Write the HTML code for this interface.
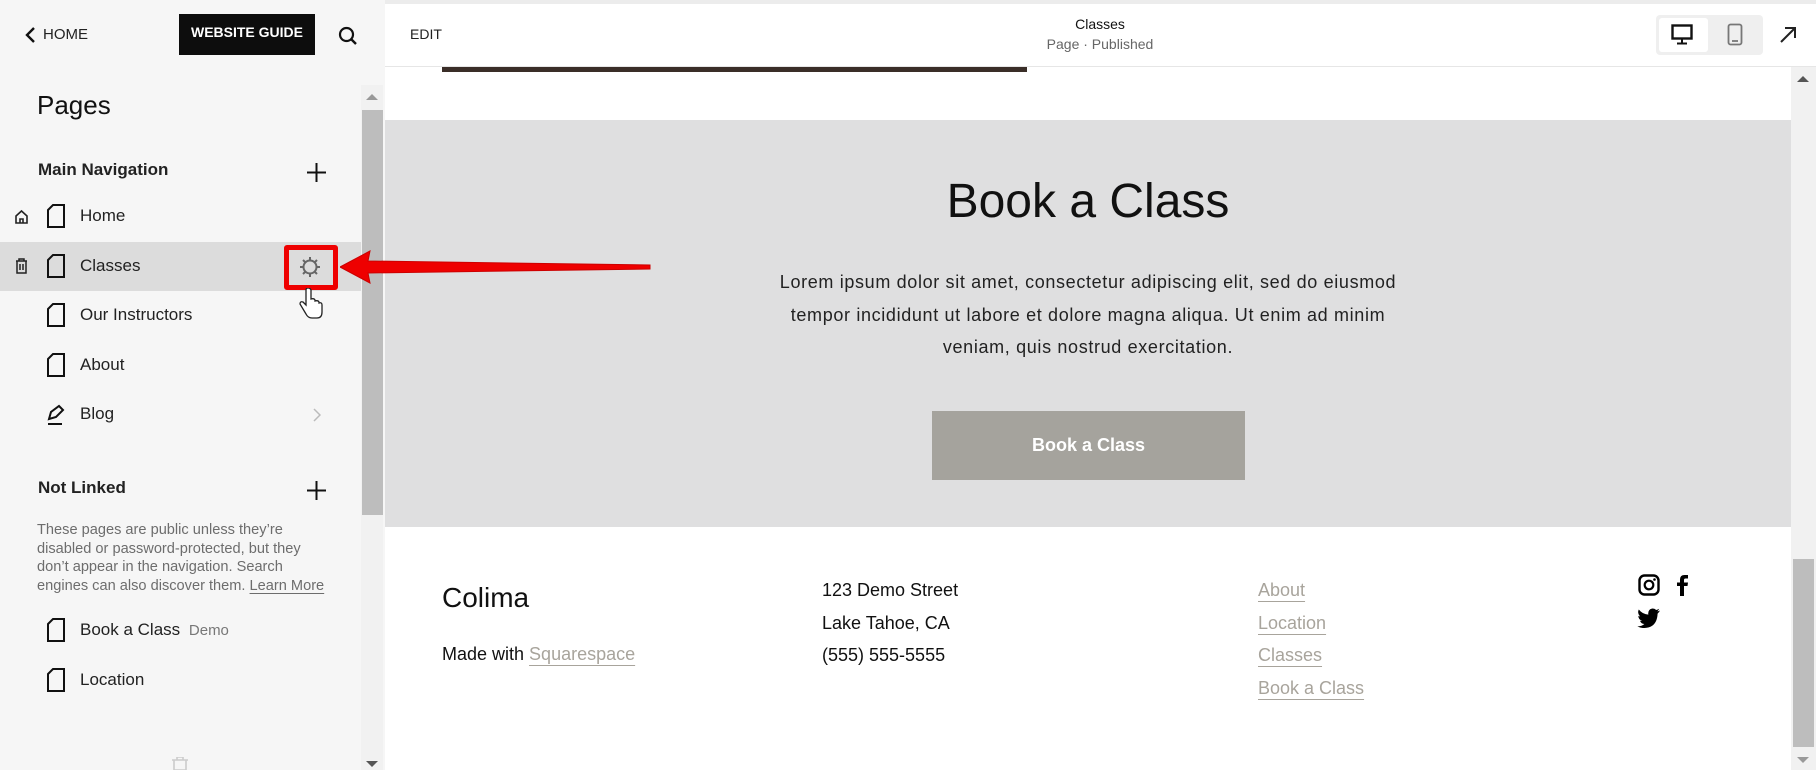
<!DOCTYPE html>
<html><head><meta charset="utf-8"><style>
*{box-sizing:border-box;margin:0;padding:0}
body{width:1816px;height:770px;overflow:hidden;position:relative;background:#fff;font-family:"Liberation Sans",sans-serif;color:#111}
.a{position:absolute}
#side{left:0;top:0;width:385px;height:770px;background:#f6f6f6}
.row{position:absolute;left:0;width:361px;height:49px;font-size:17px;color:#222}
.row .t{position:absolute;left:80px;top:14px}
.row svg.pg{position:absolute;left:47px;top:12px}
.lnk{color:#a8a49c;text-decoration:underline;text-underline-offset:5px;text-decoration-thickness:1px}
</style></head><body>
<div id="side" class="a">
  <svg class="a" style="left:24px;top:26px" width="12" height="18" viewBox="0 0 12 18"><path d="M10 2 L3 9 L10 16" fill="none" stroke="#111" stroke-width="2.4"/></svg>
  <div class="a" style="left:43px;top:26px;font-size:15px;color:#222">HOME</div>
  <div class="a" style="left:179px;top:14px;width:136px;height:41px;background:#0d0d0d;color:#fff;font-size:14px;font-weight:bold;text-align:center;line-height:37px">WEBSITE GUIDE</div>
  <svg class="a" style="left:338px;top:26px" width="20" height="20" viewBox="0 0 20 20"><circle cx="8.5" cy="8.5" r="6.5" fill="none" stroke="#111" stroke-width="2.2"/><path d="M13 13 L18 18" stroke="#111" stroke-width="2.4"/></svg>
  <div class="a" style="left:37px;top:90px;font-size:26px;color:#111">Pages</div>
  <div class="a" style="left:38px;top:160px;font-size:17px;font-weight:bold;color:#222">Main Navigation</div>
  <svg class="a" style="left:307px;top:163px" width="19" height="19"><path d="M9.5 0V19M0 9.5H19" stroke="#111" stroke-width="2"/></svg>

  <div class="row" style="top:192px"><svg class="a" style="left:14px;top:17px" width="15" height="15" viewBox="0 0 15 15"><path d="M2 14V7L7.5 2L13 7V14H2Z M6 14V10H9V14" fill="none" stroke="#222" stroke-width="1.6"/></svg><svg class="pg" width="18" height="24" viewBox="0 0 18 24"><path d="M1 6L6 1H17V23H1Z" fill="none" stroke="#111" stroke-width="2"/></svg><span class="t">Home</span></div>
  <div class="row" style="top:242px;background:#dcdcdc"><svg class="a" style="left:15px;top:16px" width="13" height="16" viewBox="0 0 13 16"><path d="M1 3H12M4 3V1H9V3M2 3V15H11V3M5 6V12M8 6V12" fill="none" stroke="#222" stroke-width="1.5"/></svg><svg class="pg" width="18" height="24" viewBox="0 0 18 24"><path d="M1 6L6 1H17V23H1Z" fill="none" stroke="#111" stroke-width="2"/></svg><span class="t">Classes</span></div>
  <div class="row" style="top:291px"><svg class="pg" width="18" height="24" viewBox="0 0 18 24"><path d="M1 6L6 1H17V23H1Z" fill="none" stroke="#111" stroke-width="2"/></svg><span class="t">Our Instructors</span></div>
  <div class="row" style="top:341px"><svg class="pg" width="18" height="24" viewBox="0 0 18 24"><path d="M1 6L6 1H17V23H1Z" fill="none" stroke="#111" stroke-width="2"/></svg><span class="t">About</span></div>
  <div class="row" style="top:390px"><svg class="a" style="left:46px;top:12px" width="20" height="24" viewBox="0 0 20 24"><path d="M3 17L5 10L13 4L17 8L10 15Z M2 22H16" fill="none" stroke="#111" stroke-width="2"/></svg><span class="t">Blog</span><svg class="a" style="left:313px;top:18px" width="8" height="14"><path d="M1 1L7 7L1 13" fill="none" stroke="#bbb" stroke-width="1.5"/></svg></div>

  <div class="a" style="left:38px;top:478px;font-size:17px;font-weight:bold;color:#222">Not Linked</div>
  <svg class="a" style="left:307px;top:481px" width="19" height="19"><path d="M9.5 0V19M0 9.5H19" stroke="#111" stroke-width="2"/></svg>
  <div class="a" style="left:37px;top:521px;width:330px;white-space:nowrap;font-size:14.6px;line-height:18.5px;color:#6d6d6d">These pages are public unless they’re<br>disabled or password-protected, but they<br>don’t appear in the navigation. Search<br>engines can also discover them. <span style="text-decoration:underline;text-underline-offset:3px">Learn More</span></div>
  <div class="row" style="top:606px"><svg class="pg" width="18" height="24" viewBox="0 0 18 24"><path d="M1 6L6 1H17V23H1Z" fill="none" stroke="#111" stroke-width="2"/></svg><span class="t">Book a Class <span style="color:#777;font-size:15px;margin-left:4px">Demo</span></span></div>
  <div class="row" style="top:656px"><svg class="pg" width="18" height="24" viewBox="0 0 18 24"><path d="M1 6L6 1H17V23H1Z" fill="none" stroke="#111" stroke-width="2"/></svg><span class="t">Location</span></div>
  <svg class="a" style="left:171px;top:757px" width="18" height="13"><path d="M1 3H17M6 3V0H12V3M3 3V13H15V3" fill="none" stroke="#ccc" stroke-width="1.6"/></svg>
  <div class="a" style="left:361px;top:85px;width:22px;height:685px;background:#f1f1f1"></div>
  <div class="a" style="left:362px;top:110px;width:21px;height:405px;background:#bdbdbd"></div>
  <svg class="a" style="left:366px;top:93px" width="12" height="8"><path d="M0 7L6 1L12 7Z" fill="#999"/></svg>
  <svg class="a" style="left:366px;top:760px" width="12" height="8"><path d="M0 1L6 7L12 1Z" fill="#555"/></svg>
  <div class="a" style="left:284px;top:245px;width:54px;height:45px;border:5px solid #e00;border-radius:3px;background:#dcdcdc"></div>
  <svg class="a" style="left:298px;top:255px" width="24" height="24" viewBox="0 0 24 24"><circle cx="12" cy="12" r="6.5" fill="none" stroke="#666" stroke-width="2"/><path d="M12 2V5.5M12 18.5V22M2 12H5.5M18.5 12H22M5 5L7.5 7.5M16.5 16.5L19 19M19 5L16.5 7.5M7.5 16.5L5 19" stroke="#666" stroke-width="2"/></svg>
  <svg class="a" style="left:297px;top:288px" width="30" height="32" viewBox="0 0 30 32"><path d="M9 2V17L6 14Q3 13 3 16L9 26Q11 30 15 30H20Q25 30 25 24V17Q25 14 22 15V14Q21 12 18 13V12Q17 10 14 11V2Q13 0 11 0Q9 0 9 2Z" fill="#fff" stroke="#222" stroke-width="1.3"/></svg>
</div>

<div class="a" style="left:385px;top:0;width:1431px;height:4px;background:#ececec"></div>
<div class="a" style="left:385px;top:66px;width:1431px;height:1px;background:#e6e6e6"></div>
<div class="a" style="left:410px;top:26px;font-size:14px;color:#222">EDIT</div>
<div class="a" style="left:1000px;top:16px;width:200px;text-align:center;font-size:14px;color:#111">Classes</div>
<div class="a" style="left:1000px;top:36px;width:200px;text-align:center;font-size:14px;color:#666">Page · Published</div>
<div class="a" style="left:1656px;top:15px;width:107px;height:40px;background:#efefef;border-radius:4px"></div>
<div class="a" style="left:1659px;top:18px;width:49px;height:34px;background:#fff;border-radius:3px"></div>
<svg class="a" style="left:1671px;top:24px" width="22" height="21" viewBox="0 0 22 21"><rect x="1.5" y="1.5" width="19" height="13" fill="none" stroke="#111" stroke-width="2.4"/><path d="M11 15V19M6 19.5H16" stroke="#111" stroke-width="2"/></svg>
<svg class="a" style="left:1727px;top:23px" width="16" height="23" viewBox="0 0 16 23"><rect x="1.5" y="1.5" width="13" height="20" rx="2" fill="none" stroke="#777" stroke-width="1.8"/><path d="M5 18H11" stroke="#777" stroke-width="1.8"/></svg>
<svg class="a" style="left:1779px;top:26px" width="18" height="18"><path d="M2 16L16 2M6 2H16V12" fill="none" stroke="#222" stroke-width="2"/></svg>

<div class="a" style="left:442px;top:67px;width:585px;height:5px;background:#3a2e28"></div>
<div class="a" style="left:385px;top:120px;width:1406px;height:407px;background:#dfdfe0"></div>
<div class="a" style="left:385px;top:174px;width:1406px;text-align:center;font-size:48px;color:#111">Book a Class</div>
<div class="a" style="left:638px;top:266px;width:900px;white-space:nowrap;text-align:center;font-size:18px;letter-spacing:0.65px;line-height:32.5px;color:#222">Lorem ipsum dolor sit amet, consectetur adipiscing elit, sed do eiusmod<br>tempor incididunt ut labore et dolore magna aliqua. Ut enim ad minim<br>veniam, quis nostrud exercitation.</div>
<div class="a" style="left:932px;top:411px;width:313px;height:69px;background:#a5a39d;color:#fff;font-size:18px;font-weight:bold;text-align:center;line-height:69px">Book a Class</div>

<div class="a" style="left:442px;top:582px;font-size:28px;color:#111">Colima</div>
<div class="a" style="left:442px;top:644px;font-size:18px;color:#111">Made with <span class="lnk">Squarespace</span></div>
<div class="a" style="left:822px;top:574px;font-size:18px;line-height:32.5px;color:#111">123 Demo Street<br>Lake Tahoe, CA<br>(555) 555-5555</div>
<div class="a" style="left:1258px;top:574px;font-size:18px;line-height:32.5px"><span class="lnk">About</span><br><span class="lnk">Location</span><br><span class="lnk">Classes</span><br><span class="lnk">Book a Class</span></div>
<svg class="a" style="left:1638px;top:574px" width="22" height="22" viewBox="0 0 22 22"><rect x="1.5" y="1.5" width="19" height="19" rx="5" fill="none" stroke="#000" stroke-width="2.4"/><circle cx="11" cy="11" r="4.3" fill="none" stroke="#000" stroke-width="2.2"/><circle cx="16.5" cy="5.5" r="1.3" fill="#000"/></svg>
<svg class="a" style="left:1676px;top:574px" width="14" height="22" viewBox="0 0 14 22"><path d="M4 22V12H1V8.5H4V5.5Q4 1 8.5 1H12V4.5H9.5Q8 4.5 8 6V8.5H12L11.5 12H8V22Z" fill="#000"/></svg>
<svg class="a" style="left:1637px;top:608px" width="24" height="20" viewBox="0 0 24 20"><path d="M23 2.5Q21.5 3.2 20.2 3.4Q21.7 2.4 22.2 0.8Q20.8 1.7 19.2 2Q17.8 0.5 15.8 0.5Q11.3 0.8 11.2 5.5Q11.2 6.1 11.4 6.6Q5.5 6.3 1.8 1.5Q0 5.2 3.2 8.4Q2.2 8.4 1.3 7.9Q1.5 11.8 5 12.6Q4 12.9 3 12.7Q4 15.7 7.4 16Q4.2 18.6 0.3 18.2Q3.8 20.3 7.6 20Q20 19.4 20.6 5.6Q22.1 4.3 23 2.5Z" fill="#000"/></svg>

<div class="a" style="left:1791px;top:67px;width:25px;height:703px;background:#f1f1f1"></div>
<div class="a" style="left:1793px;top:559px;width:21px;height:188px;background:#bdbdbd"></div>
<svg class="a" style="left:1797px;top:75px" width="12" height="8"><path d="M0 7L6 1L12 7Z" fill="#555"/></svg>
<svg class="a" style="left:1797px;top:756px" width="12" height="8"><path d="M0 1L6 7L12 1Z" fill="#999"/></svg>

<svg class="a" style="left:340px;top:249px;z-index:10" width="312" height="36" viewBox="0 0 312 36"><path d="M0 18L30 2L28 12L310 16L310 20L28 24L30 34Z" fill="#e00" stroke="#c00" stroke-width="1"/></svg>
</body></html>
